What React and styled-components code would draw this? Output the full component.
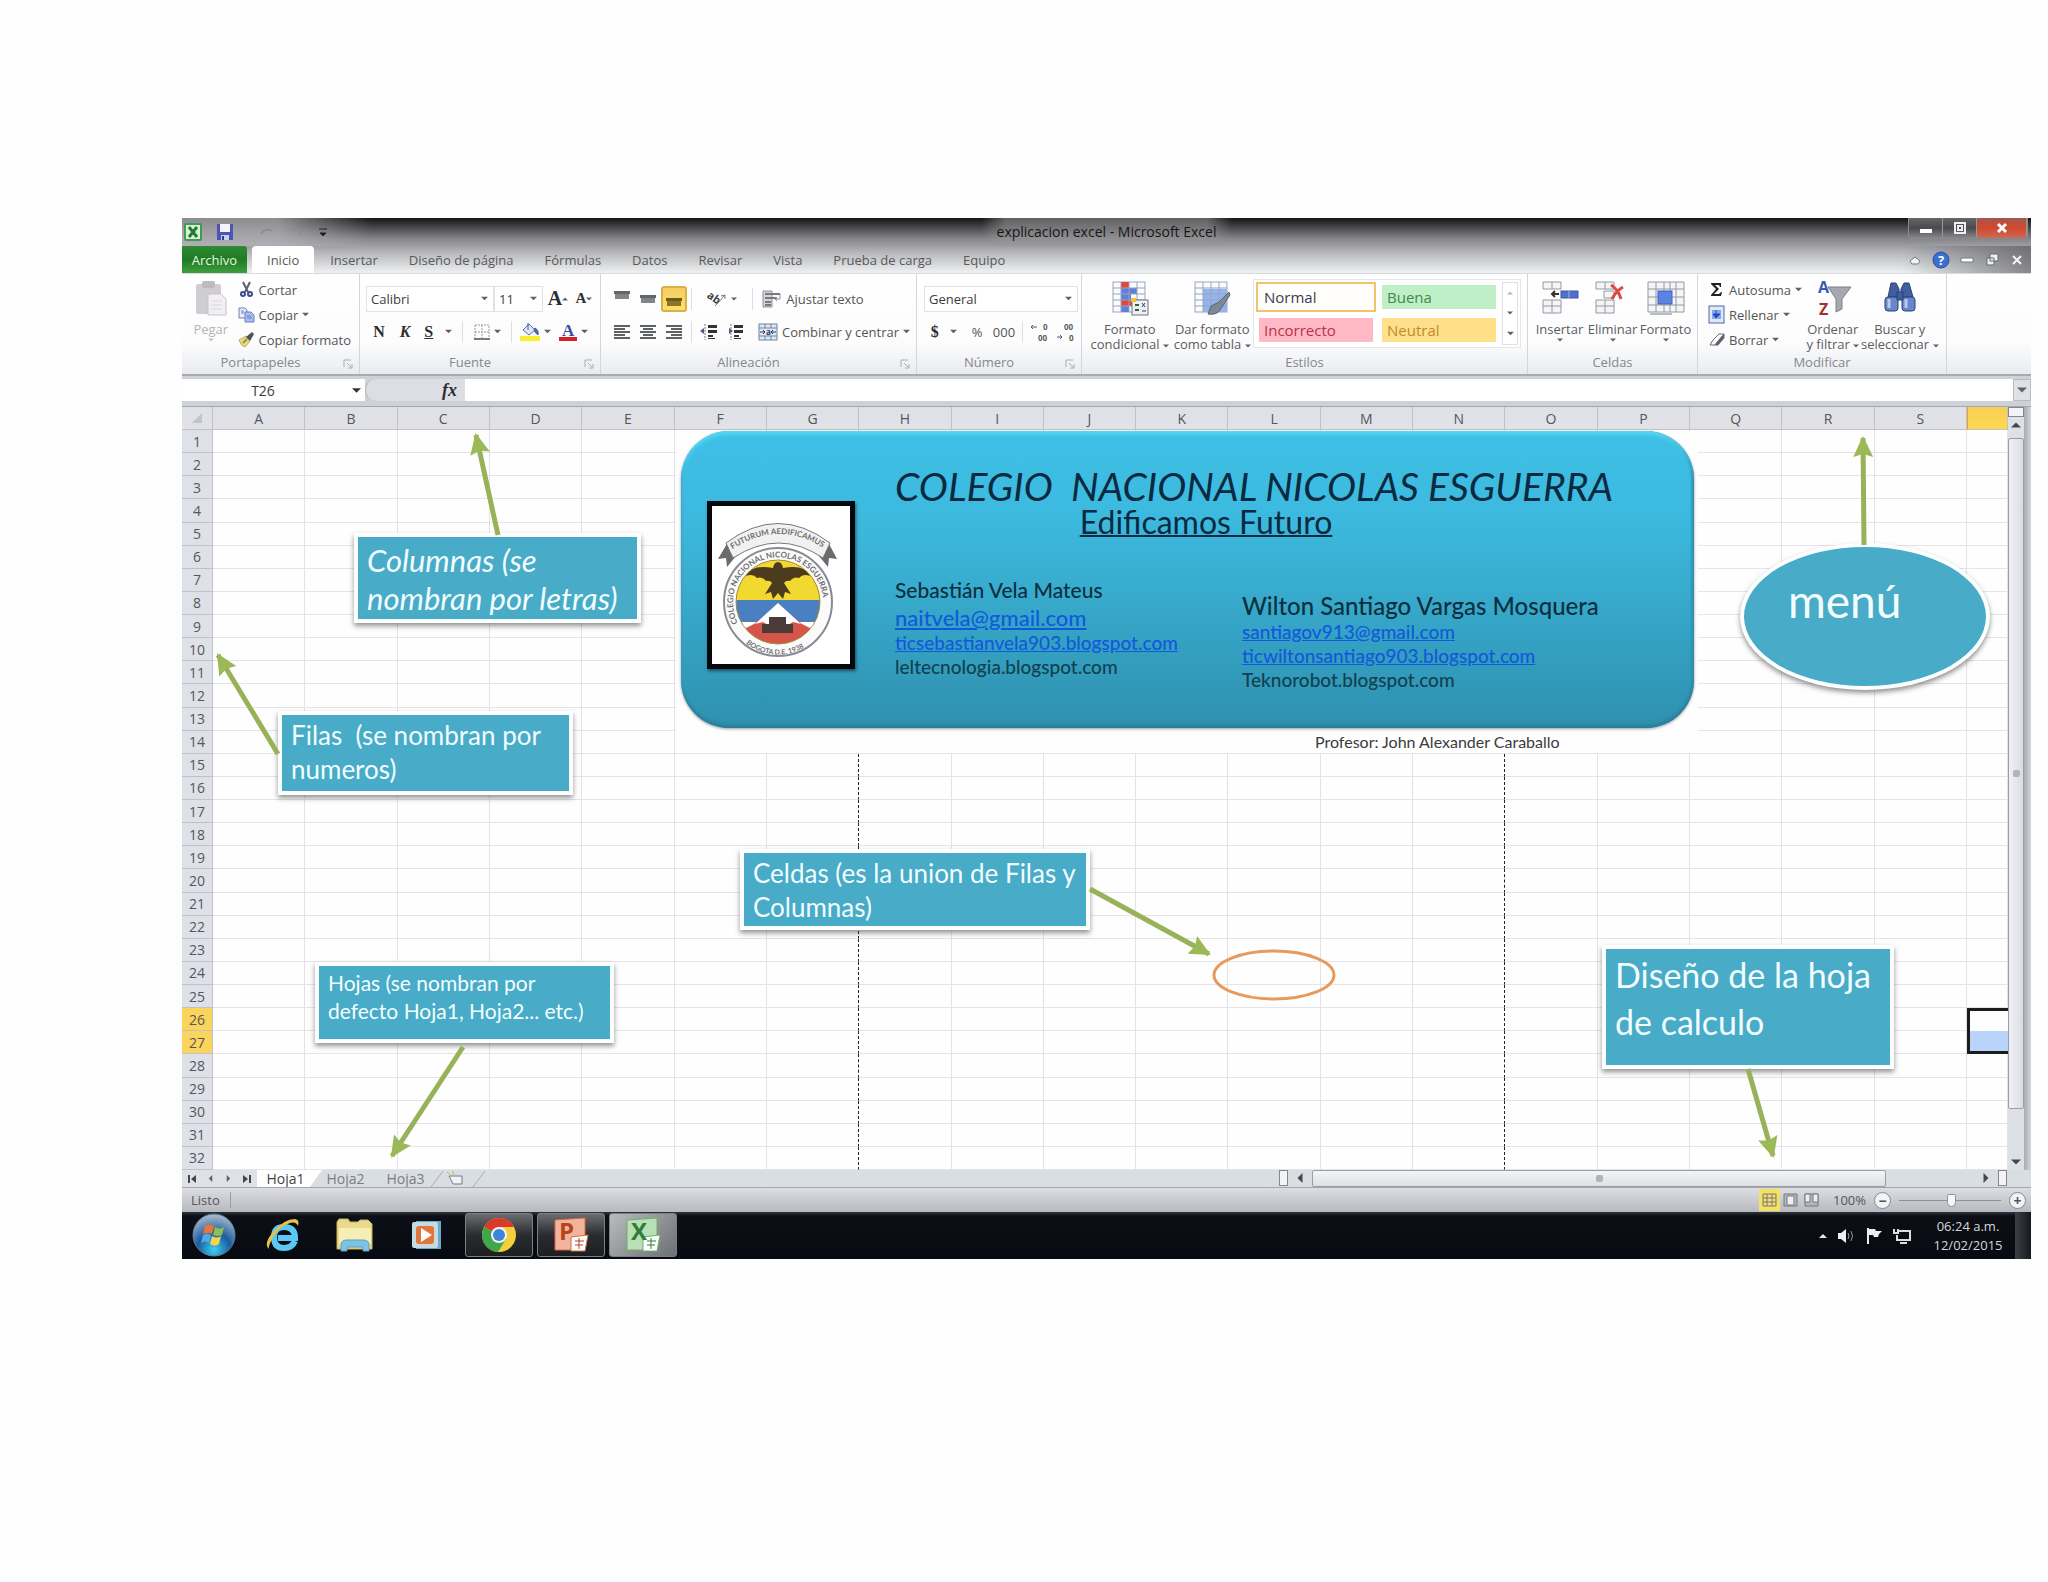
import React from 'react';
import styled, { createGlobalStyle, css } from 'styled-components';

const GlobalStyle = createGlobalStyle`
  * {
    box-sizing: border-box;
  }

  body {
    margin: 0;
    background: #fefefe;
    font-family: 'Open Sans', 'Noto Sans', sans-serif;
    font-size: 13px;
    color: #555;
  }

  button,
  input,
  select {
    font: inherit;
    color: inherit;
    margin: 0;
    padding: 0;
    border: 0;
    background: none;
  }

  svg {
    overflow: visible;
  }
`;

const Slide = styled.main`
  min-height: 100vh;
  padding: 218px 17px 40px 182px;
`;

const Window = styled.div`
  display: flex;
  flex-direction: column;
`;

/* title bar and tabs */

const Chrome = styled.header`
  background: linear-gradient(#141416 0, #404042 8px, #828286 20px, #b4b5b8 34px, #eceef0 54px);
`;

const TitleBar = styled.div`
  display: grid;
  grid-template-columns: 1fr auto 1fr;
  align-items: start;
  height: 28px;
`;

const QuickAccess = styled.div`
  display: flex;
  align-items: center;
  gap: 14px;
  width: 190px;
  height: 28px;
  padding-left: 2px;
  background: linear-gradient(90deg, rgba(180, 180, 186, 0.75) 50%, transparent);
`;

const Title = styled.div`
  padding: 0 16px;
  font-size: 14px;
  line-height: 28px;
  color: #161616;
  background: linear-gradient(
    90deg,
    rgba(150, 150, 152, 0),
    rgba(150, 150, 152, 0.6) 10%,
    rgba(150, 150, 152, 0.6) 90%,
    rgba(150, 150, 152, 0)
  );
`;

const WindowButtons = styled.div`
  display: flex;
  justify-self: end;
  margin-right: 3px;
  border: 1px solid #8a8a8c;
  border-top: 0;
  border-radius: 0 0 4px 4px;
  overflow: hidden;
`;

const WindowButton = styled.button`
  display: flex;
  align-items: center;
  justify-content: center;
  width: ${(p) => (p.$close ? 50 : 34)}px;
  height: 20px;
  border-right: 1px solid #98989a;
  background: ${(p) =>
    p.$close ? 'linear-gradient(#a4574c, #d2492f 50%, #c96a55)' : 'linear-gradient(#66666a, #4a4a4e 50%, #88888c)'};
`;

const TabBar = styled.nav`
  display: flex;
  gap: 1px;
  height: 27px;
`;

const FileTab = styled.button`
  width: 65px;
  margin-right: 4px;
  color: #e6f6e0;
  background: linear-gradient(#2f8a33, #1f7a24 50%, #3f9e3c);
  border-radius: 0 3px 0 0;
`;

const Tab = styled.button`
  padding: 0 15px;
  color: #58585a;
  ${(p) =>
    p.$active &&
    css`
      background: #fff;
      border-radius: 4px 4px 0 0;
    `}
`;

const TabTools = styled.div`
  display: flex;
  align-items: center;
  gap: 9px;
  margin-left: auto;
  padding: 0 6px;
  background: linear-gradient(90deg, transparent, rgba(90, 90, 94, 0.7));
`;

const ToolButton = styled.button`
  display: flex;
  align-items: center;
  justify-content: center;
  min-width: 16px;
`;

/* ribbon */

const Ribbon = styled.section`
  display: flex;
  height: 103px;
  background: linear-gradient(#fff, #fcfcfd 70%, #e9ebef);
  border-top: 1px solid #d8dadd;
  border-bottom: 2px solid #a9abb3;
`;

const Group = styled.div`
  display: flex;
  flex-direction: column;
  flex: none;
  width: ${(p) => p.$width}px;
  border-right: 1px solid #d3d6dc;
`;

const GroupBody = styled.div`
  display: flex;
  flex: 1;
  padding: 3px ${(p) => p.$pad || 6}px 0;
`;

const GroupLabel = styled.div`
  position: relative;
  height: 20px;
  padding-right: ${(p) => (p.$launcher ? 20 : 0)}px;
  line-height: 16px;
  text-align: center;
  color: #85878c;
`;

const Launcher = styled.svg`
  position: absolute;
  right: 6px;
  top: 5px;
`;

const BigButton = styled.button`
  display: flex;
  flex-direction: column;
  align-items: center;
  width: ${(p) => p.$width}px;
  line-height: 15px;
  text-align: center;
  white-space: nowrap;
  color: ${(p) => (p.$muted ? '#b4b4b8' : '#5c5c60')};

  > svg:first-child {
    margin: 3px 0 6px;
  }
`;

const Stack = styled.div`
  display: flex;
  flex-direction: column;
  padding-top: ${(p) => p.$top || 0}px;
`;

const RowButton = styled.button`
  display: flex;
  align-items: center;
  gap: 4px;
  height: 25px;
  padding: 0 3px;
  white-space: nowrap;

  > svg:first-child {
    flex: none;
  }
`;

const Tools = styled.div`
  display: flex;
  align-items: center;
  height: 33px;
`;

const Tool = styled.button`
  display: flex;
  align-items: center;
  justify-content: center;
  flex: none;
  gap: ${(p) => p.$gap ?? 4}px;
  width: ${(p) => p.$width || 26}px;
  height: 26px;
  white-space: nowrap;
  ${(p) =>
    p.$active &&
    css`
      border: 2px solid #d9b04a;
      border-radius: 3px;
      background: linear-gradient(#f6cd62, #ffdf6c);
    `}
`;

const Glyph = styled.span`
  font-family: 'Liberation Serif', serif;
  font-size: ${(p) => p.$size || 16}px;
  font-weight: bold;
  font-style: ${(p) => (p.$italic ? 'italic' : 'normal')};
  text-decoration: ${(p) => (p.$underline ? 'underline' : 'none')};
  color: #2d2d30;
`;

const Split = styled.span`
  flex: none;
  width: 1px;
  height: 22px;
  margin: 0 4px;
  background: #dcdee2;
`;

const Combo = styled.label`
  display: flex;
  align-items: center;
  width: ${(p) => p.$width}px;
  height: 26px;
  padding: 0 5px 0 4px;
  border: 1px solid #e0e2e6;
  background: #fff;
  color: #3c3c40;

  select {
    flex: 1;
    min-width: 0;
    appearance: none;
    outline: 0;
  }
`;

const Gallery = styled.div`
  display: grid;
  grid-template-columns: 120px 120px 16px;
  grid-template-rows: 30px 30px;
  gap: 3px;
  align-self: start;
  margin-top: 2px;
  padding: 2px;
  border: 1px solid #e4e6e9;
  background: #fff;
`;

const StyleCell = styled.button`
  margin: ${(p) => (p.$active ? 0 : 3)}px;
  padding-left: ${(p) => (p.$active ? 6 : 5)}px;
  font-size: 15px;
  line-height: 20px;
  text-align: left;
  color: ${(p) => p.$ink};
  background: ${(p) => p.$fill};
  border: ${(p) => (p.$active ? '2px solid #efc46a' : '0')};
`;

const GalleryScroll = styled.div`
  grid-column: 3;
  grid-row: 1 / 3;
  display: flex;
  flex-direction: column;
  justify-content: space-around;
  align-items: center;
  border: 1px solid #dfe1e5;
`;

/* formula bar */

const FormulaBar = styled.div`
  display: flex;
  height: 31px;
  padding: 3px 0 5px;
  background: #cfd1d8;
  border-bottom: 1px solid #a5a7ae;
`;

const NameBox = styled.label`
  display: flex;
  align-items: center;
  width: 183px;
  padding-right: 4px;
  background: #fff;
  color: #3a3a3d;

  input {
    flex: 1;
    min-width: 0;
    padding-right: 8px;
    font-size: 14px;
    text-align: center;
  }
`;

const FxArea = styled.div`
  display: flex;
  justify-content: flex-end;
  align-items: center;
  width: 100px;
  padding-right: 8px;
  border-radius: 12px 0 0 12px;
  background: #dcdee4;
  border-left: 1px solid #b6b8be;
`;

const FormulaInput = styled.input`
  flex: 1;
  background: #fff;
`;

const Expand = styled.button`
  display: flex;
  align-items: center;
  justify-content: center;
  width: 18px;
  border: 1px solid #b9bbc2;
  background: #dfe1e6;
`;

/* sheet */

const SheetArea = styled.section`
  position: relative;
  display: flex;
`;

const Grid = styled.table`
  flex: 1;
  width: 100%;
  min-width: 0;
  height: 763px;
  table-layout: fixed;
  border-collapse: separate;
  border-spacing: 0;
  background: #fefefe;
  font-size: 14px;

  th {
    padding: 1px 0 0;
    font-weight: 500;
    line-height: 18px;
    color: #55565a;
    background: #dfe1e8;
    border-right: 1px solid #c0c2ca;
    border-bottom: 1px solid #c0c2ca;
  }

  thead th {
    height: 23px;
    background: linear-gradient(#dde2e7, #e2e1e6);
  }

  td {
    padding: 0;
    border-right: 1px solid #e3e1e6;
    border-bottom: 1px solid #e6e4e8;
  }

  tbody tr:nth-child(n + 15) td:nth-child(8),
  tbody tr:nth-child(n + 15) td:nth-child(15) {
    border-right: 1px dashed #222;
  }

  tr.picked th {
    background: #fbd45c;
  }

  thead th:last-child {
    background: linear-gradient(#f8cf55, #ffd84f);
    border-left: 1px solid #dda43a;
  }

  tr.picked td:last-child {
    border-left: 3px solid #1c1c1c;
    border-right: 0;
  }

  tr.first td:last-child {
    border-top: 3px solid #1c1c1c;
    border-bottom: 0;
  }

  tr.last td:last-child {
    border-bottom: 3px solid #1c1c1c;
    background: #b9d3fa;
  }
`;

const VScroll = styled.div`
  display: flex;
  flex: none;
  flex-direction: column;
  align-items: center;
  width: 23px;
  padding-right: 7px;
  background: linear-gradient(90deg, #dde0e6 16px, #a9abb3 16px, #d5d7dc 23px);
`;

const SplitBox = styled.div`
  flex: none;
  width: ${(p) => (p.$upright ? 9 : 16)}px;
  height: ${(p) => (p.$upright ? 16 : 10)}px;
  border: 1px solid #85878d;
  background: #f2f3f5;
`;

const ScrollThumb = styled.div`
  display: flex;
  align-items: center;
  justify-content: center;
  border: 1px solid #9b9da4;
  border-radius: 2px;
  background: ${(p) => (p.$vertical ? 'linear-gradient(90deg, #f0f0f6, #dcdce4)' : 'linear-gradient(#f4f5f7, #dcdfe5)')};
  ${(p) =>
    p.$vertical
      ? css`
          width: 16px;
          height: 671px;
          margin: 5px 0 auto;
        `
      : css`
          flex: 1;
          margin-right: 88px;
        `}
`;

const Grip = styled.span`
  width: 7px;
  height: 7px;
  border-radius: 2px;
  background: #b2b4ba;
`;

const ArrowSlot = styled.div`
  display: flex;
  align-items: center;
  justify-content: center;
  width: 16px;
  height: 16px;
`;

/* drawn objects that float over the cells */

const Layer = styled.div`
  position: absolute;
  inset: 0;
`;

const Arrows = styled.svg`
  position: absolute;
  inset: 0;
  width: 100%;
  height: 100%;
`;

const BannerPatch = styled.div`
  position: absolute;
  left: 494px;
  top: 24px;
  width: 1022px;
  height: 322px;
  background: #fefefe;
`;

const Banner = styled.div`
  display: flex;
  margin: 0 4px 0 5px;
  height: 297px;
  padding: 70px 0 0 26px;
  border-radius: 48px;
  background: linear-gradient(#3fc0e6, #3cb9de 30%, #2f90ae);
  box-shadow: inset 0 5px 4px -2px #5adcf5, inset 0 -3px 3px #2b7f9b, inset -2px 0 3px #2a86a4, 0 1px 3px #999;
  font-family: Lato, 'Open Sans', sans-serif;
  color: #0b2a40;
`;

const Crest = styled.svg`
  flex: none;
  border: 5px solid #05080c;
  background: #fff;
  box-shadow: 1px 2px 3px rgba(0, 0, 0, 0.5);
`;

const BannerText = styled.div`
  flex: 1;
  margin: -36px 0 0 40px;
`;

const School = styled.h1`
  margin: 0;
  font-size: 39px;
  font-weight: normal;
  font-style: italic;
  line-height: 42px;
  white-space: pre;
`;

const Motto = styled.div`
  width: 622px;
  font-size: 32px;
  line-height: 30px;
  text-align: center;
  text-decoration: underline;
  text-decoration-thickness: 2px;
`;

const Authors = styled.div`
  display: grid;
  grid-template-columns: 347px 1fr;
`;

const Author = styled.address`
  display: flex;
  flex-direction: column;
  align-items: flex-start;
  padding-top: ${(p) => p.$top}px;
  font-size: 19px;
  font-weight: 500;
  font-style: normal;
  line-height: 24px;
  color: #10414f;

  strong {
    font-size: ${(p) => p.$name}px;
    font-weight: 500;
    line-height: 28px;
    color: #0c2f40;
  }

  a {
    color: #1258dc;
  }

  a.large {
    font-size: 22px;
    line-height: 27px;
  }
`;

const Teacher = styled.div`
  padding: 3px 0 0 639px;
  font-family: Lato, 'Open Sans', sans-serif;
  font-size: 16px;
  line-height: 22px;
  color: #3b3b3b;
`;

const Callout = styled.div`
  position: absolute;
  left: ${(p) => p.$x}px;
  top: ${(p) => p.$y}px;
  width: ${(p) => p.$w}px;
  height: ${(p) => p.$h}px;
  padding: ${(p) => p.$pad || 0}px 9px;
  border: 4px solid #fbffff;
  background: #48abc7;
  box-shadow: 0 3px 5px rgba(60, 60, 60, 0.55);
  font-family: Lato, 'Open Sans', sans-serif;
  font-size: ${(p) => p.$size}px;
  font-style: ${(p) => (p.$italic ? 'italic' : 'normal')};
  line-height: ${(p) => p.$line}px;
  color: #f2fdff;
  white-space: pre-line;
`;

const MenuBubble = styled.div`
  position: absolute;
  left: 1558px;
  top: 136px;
  width: 250px;
  height: 147px;
  padding: 27px 0 0 44px;
  border: 4px solid #fbffff;
  border-radius: 50%;
  background: #48abc7;
  box-shadow: 0 3px 5px rgba(60, 60, 60, 0.55);
  font-family: Lato, 'Open Sans', sans-serif;
  font-size: 46px;
  line-height: 54px;
  color: #f2fdff;
`;

/* sheet tabs, status bar, taskbar */

const SheetTabs = styled.div`
  display: flex;
  height: 18px;
  background: #d9dee3;
  border-bottom: 1px solid #a4a6ad;
`;

const TabNav = styled.div`
  display: flex;
  align-items: center;
  justify-content: space-around;
  width: 75px;
  background: #dfe1e8;
`;

const SheetTab = styled.button`
  width: 65px;
  padding-right: 8px;
  margin-right: -5px;
  font-size: 14px;
  line-height: 17px;
  color: ${(p) => (p.$active ? '#3f3f44' : '#7a7c84')};
  background: ${(p) => (p.$active ? '#fff' : 'none')};
  clip-path: polygon(0 0, 100% 0, calc(100% - 12px) 100%, 0 100%);
`;

const HScroll = styled.div`
  display: flex;
  align-items: stretch;
  width: 728px;
  margin: 0 24px 0 auto;
  gap: 4px;
`;

const StatusBar = styled.footer`
  display: flex;
  align-items: center;
  height: 24px;
  background: linear-gradient(#dcdee3, #c9cbd1 50%, #b7b9c0);
`;

const Ready = styled.div`
  padding: 0 10px 0 9px;
  border-right: 1px solid #9b9da4;
  line-height: 16px;
`;

const StatusRight = styled.div`
  display: flex;
  align-items: center;
  gap: 8px;
  margin-left: auto;
  padding-right: 5px;
`;

const Views = styled.div`
  display: flex;
  margin-right: 3px;
`;

const ViewButton = styled.button`
  display: flex;
  align-items: center;
  justify-content: center;
  width: 21px;
  height: 22px;
  background: ${(p) => (p.$active ? '#f4e062' : 'none')};
`;

const ZoomSlider = styled.input`
  width: 102px;
  height: 16px;
  appearance: none;

  &::-webkit-slider-runnable-track {
    height: 1px;
    background: #8f9198;
  }

  &::-webkit-slider-thumb {
    appearance: none;
    width: 9px;
    height: 13px;
    margin-top: -6px;
    border: 1px solid #8f9198;
    border-radius: 2px 2px 5px 5px;
    background: #f6f7f9;
  }
`;

const RoundButton = styled.button`
  width: 17px;
  height: 17px;
  border: 1px solid #85878e;
  border-radius: 50%;
  background: #f2f3f5;
  line-height: 13px;
  font-weight: bold;
  font-size: 14px;
`;

const TaskBar = styled.nav`
  display: flex;
  height: 47px;
  background: linear-gradient(#30343b 0, #0c0f15 4px, #070a10);
`;

const Task = styled.button`
  display: flex;
  align-items: center;
  justify-content: center;
  width: ${(p) => (p.$start ? 63 : 68)}px;
  margin: 1px 4px 2px 0;
  border-radius: 3px;
  ${(p) =>
    p.$open &&
    css`
      border: 1px solid #7c7f84;
      background: ${p.$front
        ? 'linear-gradient(135deg, #b9bcbe, #6c7073)'
        : 'linear-gradient(#6b6d70, #2a2c30 50%, #1c1e22)'};
    `}
`;

const Tray = styled.div`
  display: flex;
  align-items: center;
  gap: 10px;
  margin-left: auto;
  color: #d6d8da;
`;

const Clock = styled.time`
  width: 94px;
  font-size: 13px;
  line-height: 19px;
  text-align: center;
`;

const ShowDesktop = styled.button`
  align-self: stretch;
  width: 16px;
  margin-left: -10px;
  border-left: 1px solid #3a3d42;
  background: linear-gradient(90deg, #3b3e43, #15181c);
`;

/* icons */

const Caret = ({ dir = 'down', size = 5, color = '#5f6166' }) => {
  const turn = { down: 0, left: 90, up: 180, right: 270 }[dir];
  return (
    <svg width={size + 2} height={size + 2} viewBox="0 0 8 8">
      <path d="M0 2h8L4 6z" fill={color} transform={`rotate(${turn} 4 4)`} />
    </svg>
  );
};

const EndCaret = ({ flip }) => (
  <svg width="9" height="8" viewBox="0 0 9 8" fill="#44464b">
    <path d={flip ? 'M0 0l5 4-5 4zM6 0h2v8H6z' : 'M9 0L4 4l5 4zM1 0h2v8H1z'} />
  </svg>
);

const Corner = () => (
  <Launcher width="10" height="10" viewBox="0 0 10 10" fill="none" stroke="#a9abb1">
    <path d="M1 8V1h7M4 4l4 4M9 5v4H5" />
  </Launcher>
);

const Lines = ({ widths, align = 'left', y = 1 }) => (
  <svg width="18" height="16" viewBox="0 0 18 16" fill="#5d6163">
    {widths.map((w, i) => {
      const x = { left: 1, center: (18 - w) / 2, right: 17 - w }[align];
      return <rect key={i} x={x} y={y + i * 3} width={w} height="2" />;
    })}
  </svg>
);

const Block = ({ y, color = '#62666a' }) => (
  <svg width="18" height="16" viewBox="0 0 18 16" fill={color}>
    <rect x="1" y={y} width="16" height="3" />
    <rect x="2" y={y + 3} width="14" height="5" opacity="0.8" />
  </svg>
);

const Indent = ({ flip }) => (
  <svg width="18" height="16" viewBox="0 0 18 16">
    <path d="M8 1h9v3H8zM8 6h9v3H8zM8 11h5v2H8zM8 14h7v1H8z" fill="#333" />
    <path d="M5 0v16" stroke="#777" strokeDasharray="2 1" />
    <path d={flip ? 'M0 7l4-3v6z' : 'M7 7L3 4v6z'} fill="#4a5a86" />
  </svg>
);

const PasteIcon = () => (
  <svg width="34" height="36" viewBox="0 0 34 36">
    <rect x="2" y="4" width="25" height="30" rx="2" fill="#cfcdd2" />
    <rect x="8" y="1" width="13" height="7" rx="2" fill="#bdbac0" />
    <path d="M14 14h13l5 5v16H14z" fill="#f1eff2" stroke="#c6c4c9" />
    <path d="M17 21h11M17 25h11M17 29h11" stroke="#d9d7db" />
  </svg>
);

const CutIcon = () => (
  <svg width="17" height="17" viewBox="0 0 17 17" fill="none" strokeWidth="2">
    <path d="M5 1l5 10M12 1L7 11" stroke="#5a6070" />
    <circle cx="5" cy="13" r="2" stroke="#3a4b8e" />
    <circle cx="12" cy="13" r="2" stroke="#3a4b8e" />
  </svg>
);

const CopyIcon = () => (
  <svg width="17" height="17" viewBox="0 0 17 17" fill="#e6eefc" stroke="#6a7fc0">
    <path d="M1 2h6l2 2v8H1z" />
    <path d="M7 6h6l3 3v7H7z" fill="#a9bdf0" />
    <path d="M9 10h4M9 12h5M3 5h3M3 7h3" />
  </svg>
);

const BrushIcon = () => (
  <svg width="17" height="17" viewBox="0 0 17 17">
    <path d="M1 9l7-4 4 5-5 6q-4-1-6-7z" fill="#ead98a" stroke="#c2a94d" />
    <path d="M8 6l6-5 2 2-4 7z" fill="#4d5257" />
    <path d="M5 12l4-4" stroke="#7fa04c" strokeWidth="2" />
  </svg>
);

const BordersIcon = () => (
  <svg width="16" height="16" viewBox="0 0 16 16" fill="none" stroke="#9a9ca2">
    <path d="M1 1h14v13M1 1v13M8 1v13M1 8h14" strokeDasharray="2 1" />
    <path d="M0 15h16" stroke="#77797e" strokeWidth="2" />
  </svg>
);

const FillIcon = () => (
  <svg width="20" height="20" viewBox="0 0 20 20">
    <path d="M3 8l6-6 6 6-6 5z" fill="#dfe7f7" stroke="#5570a8" />
    <path d="M8 1v7M15 6q4 2 3 7-3-2-4-5z" fill="#4a6cae" stroke="#4a5f8e" />
    <rect y="14" width="20" height="5" fill="#f6ee2e" />
  </svg>
);

const FontColorIcon = () => (
  <svg width="18" height="20" viewBox="0 0 18 20">
    <text x="3" y="14" fontFamily="Liberation Serif, serif" fontSize="17" fontWeight="bold" fill="#39509c">A</text>
    <rect y="15" width="18" height="4" fill="#dc1f26" />
  </svg>
);

const OrientIcon = () => (
  <svg width="20" height="18" viewBox="0 0 20 18">
    <text x="0" y="11" transform="rotate(35 6 8)" fontSize="11" fontWeight="bold" fill="#444">ab</text>
    <path d="M8 16L18 5M18 5l-4 1M18 5v4" stroke="#777" fill="none" />
  </svg>
);

const WrapIcon = () => (
  <svg width="20" height="18" viewBox="0 0 20 18">
    <path d="M1 1h9v16H1z" fill="#d5d6d9" stroke="#8e9095" />
    <path d="M3 4h15M3 8h12M3 12h6M3 15h6" stroke="#77797e" strokeWidth="2" />
    <path d="M18 4v5h-5M15 7l-2 2 2 2" fill="none" stroke="#8a8c91" />
  </svg>
);

const MergeIcon = () => (
  <svg width="20" height="18" viewBox="0 0 20 18">
    <rect x="1" y="1" width="18" height="16" fill="#dfe8f5" stroke="#6e83a0" />
    <path d="M1 5h18M1 13h18M7 1v4M13 1v4M7 13v4M13 13v4" stroke="#6e83a0" />
    <path d="M2 9h5M18 9h-5M5 7l2 2-2 2M15 7l-2 2 2 2" fill="none" stroke="#2d3b5c" />
    <text x="8" y="12" fontSize="8" fontWeight="bold" fill="#2d3b5c">a</text>
  </svg>
);

const DecimalIcon = ({ less }) => (
  <svg width="20" height="20" viewBox="0 0 20 20" fill="#5a5c61" fontSize="8" fontWeight="bold">
    <text x={less ? 8 : 13} y="8">{less ? '00' : '0'}</text>
    <text x={less ? 13 : 8} y="19">{less ? '0' : '00'}</text>
    <path d={less ? 'M1 15h5M4 13l2 2-2 2' : 'M1 5h6M3 3L1 5l2 2'} stroke="#4d5a7c" fill="none" />
  </svg>
);

const TableIcon = ({ kind }) => (
  <svg width="38" height="36" viewBox="0 0 38 36">
    <rect x="2" y="2" width="32" height="30" fill="#fbfcfe" stroke="#9aa3b8" />
    {kind === 'rules' ? (
      <>
        <path d="M10 2h8v6h-8zM10 20h12v6H10z" fill="#e2473d" />
        <path d="M10 8h16v6H10zM10 14h10v6H10zM10 26h8v6h-8z" fill="#5d80dc" />
      </>
    ) : (
      <path d="M10 9h24v23H10z" fill="#94b4f0" />
    )}
    <path d="M2 8h32M2 14h32M2 20h32M2 26h32M10 2v30M18 2v30M26 2v30" stroke="#9aa3b8" />
    {kind === 'rules' ? (
      <>
        <rect x="21" y="20" width="16" height="15" fill="#eef0f2" stroke="#6d7480" />
        <path d="M24 25h4M24 30h4" stroke="#35613a" strokeWidth="2" />
        <path d="M31 23l3 4M34 23l-3 4M31 31h4" stroke="#33415f" />
        <path d="M20 18h5v4h-5z" fill="#f4c53c" />
      </>
    ) : (
      <path d="M36 12L26 22l-8 4-3 8q10 2 14-7l8-12z" fill="#7d8796" stroke="#5d6674" />
    )}
  </svg>
);

const CellsIcon = ({ kind }) => (
  <svg width="38" height="36" viewBox="0 0 38 36" fill="#f4f5f7" stroke="#9598a0">
    {kind === 'format' ? (
      <>
        <path d="M1 2h36v30H1zM1 9h36M1 25h36M9 2v30M29 2v30M17 2v30M23 2v30M1 17h36" />
        <rect x="11" y="11" width="14" height="13" fill="#5b83e4" stroke="#3e62bd" />
        <path d="M3 34h22" stroke="#b9bcc2" strokeWidth="2" />
      </>
    ) : (
      <>
        <path d="M2 2h18v7H2zM11 2v7M2 20h18v13H2zM11 20v13M2 26h18" />
        {kind === 'insert' ? (
          <>
            <rect x="20" y="11" width="17" height="7" fill="#4f70cb" stroke="#3c58a8" />
            <path d="M28 11v7" stroke="#9db2ea" />
            <path d="M18 14h-7M14 11l-3 3 3 3" fill="none" stroke="#333" strokeWidth="2" />
          </>
        ) : (
          <>
            <path d="M10 11h10v7H10z" />
            <path d="M17 5q7 4 10 14M29 7q-7 4-11 12" fill="none" stroke="#dd4a45" strokeWidth="3" />
          </>
        )}
      </>
    )}
  </svg>
);

const SigmaIcon = () => (
  <svg width="17" height="17" viewBox="0 0 17 17">
    <path d="M3 2h10v4h-1l-1-2H7l4 4-5 5h5l2-2h1l-1 4H3v-1l5-6-5-5z" fill="#222" />
  </svg>
);

const FillDownIcon = () => (
  <svg width="17" height="19" viewBox="0 0 17 19">
    <rect x="1" y="1" width="15" height="17" fill="#dfe8fa" stroke="#51689e" />
    <rect x="4" y="5" width="9" height="9" fill="#86a6ee" />
    <path d="M8 5v7M5 9l3 4 4-4z" fill="#2649b8" stroke="#2649b8" />
  </svg>
);

const EraserIcon = () => (
  <svg width="17" height="17" viewBox="0 0 17 17" fill="#fff" stroke="#6a6c72">
    <path d="M5 9l6-6h5l-6 7-3 4H2z" />
    <path d="M7 14l9-11v4l-6 7z" fill="#5b5d63" />
  </svg>
);

const SortIcon = () => (
  <svg width="38" height="36" viewBox="0 0 38 36" fontWeight="bold" fontSize="16">
    <path d="M14 7h23L28 19v10l-6 3V19z" fill="#a5a8ad" stroke="#7e8187" />
    <text x="4" y="13" fill="#4256b4">A</text>
    <text x="5" y="35" fill="#a3302e">Z</text>
  </svg>
);

const BinocularsIcon = () => (
  <svg width="36" height="36" viewBox="0 0 36 36" fill="#3f5f9f" stroke="#2b4376">
    <path d="M9 3h5l3 6v8H6zM22 3h5l4 14H19V9z" />
    <rect x="3" y="17" width="13" height="14" rx="3" fill="#6787c8" />
    <rect x="20" y="17" width="13" height="14" rx="3" fill="#6787c8" />
    <path d="M15 12h6v8h-6z" />
    <path d="M7 19v9M24 19v9" stroke="#b9caee" strokeWidth="3" />
  </svg>
);

const ExcelMark = () => (
  <svg width="18" height="18" viewBox="0 0 18 18">
    <rect width="18" height="18" rx="2" fill="#3f9c4e" />
    <rect x="2" y="2" width="14" height="14" fill="#d8f0d6" />
    <path d="M5 4l8 10M13 4L5 14" stroke="#237a35" strokeWidth="3" />
  </svg>
);

const SaveIcon = () => (
  <svg width="18" height="18" viewBox="0 0 18 18">
    <path d="M1 1h16v16H1z" fill="#4a55b5" />
    <path d="M4 1h10v8H4z" fill="#f3f5fb" />
    <path d="M5 12h8v5H5z" fill="#c9cfe6" />
    <path d="M6 13h2v4H6z" fill="#33408f" />
  </svg>
);

const MiniGrid = () => (
  <svg width="15" height="14" viewBox="0 0 15 14" fill="none" stroke="#77797f">
    <path d="M1 1h13v12H1zM1 5h13M1 9h13M5 1v12M10 1v12" />
  </svg>
);

const MiniPage = ({ breaks }) => (
  <svg width="15" height="14" viewBox="0 0 15 14" fill="#eceef1" stroke="#77797f">
    <path d="M1 1h13v12H1z" fill="#b4b6bb" />
    <path d={breaks ? 'M1 1h5v8H1zM9 1h5v8H9z' : 'M4 3h7v9H4z'} />
  </svg>
);

const StartIcon = () => (
  <svg width="44" height="44" viewBox="0 0 44 44">
    <defs>
      <radialGradient id="orb" cx="50%" cy="85%" r="80%">
        <stop offset="0" stopColor="#39d0f2" />
        <stop offset="0.5" stopColor="#1c5c9e" />
        <stop offset="1" stopColor="#9fb4c8" />
      </radialGradient>
    </defs>
    <circle cx="22" cy="22" r="21" fill="url(#orb)" stroke="#5f7f9c" />
    <path d="M13 13q5-3 9 0l-2 8q-4-2-9 0z" fill="#e8743a" />
    <path d="M23 14q5 3 9 0l-2 8q-4 2-9 0z" fill="#8cc152" />
    <path d="M11 22q4-3 8 0l-2 8q-4-3-8 0z" fill="#4fa8e8" />
    <path d="M20 23q5 3 9 0l-2 8q-4 3-9 0z" fill="#f6d34a" />
  </svg>
);

const ExplorerIcon = () => (
  <svg width="38" height="38" viewBox="0 0 38 38" fill="none">
    <path d="M31 25q-3 7-11 7-10 0-10-11 0-10 10-10 11 0 11 11H14" stroke="#5cc8f5" strokeWidth="6" />
    <path d="M5 33q-6-5 4-17Q20 3 31 3q5 1 3 7-2-5-8-3Q14 11 8 23q-4 8-3 10z" fill="#e8c14a" />
  </svg>
);

const FolderIcon = () => (
  <svg width="40" height="38" viewBox="0 0 40 38">
    <path d="M2 6l2-3h9l2 3h8l2-2h8l4 4v25H2z" fill="#e9d98a" stroke="#c7b562" />
    <path d="M4 12h32v16H4z" fill="#f6eeb4" />
    <path d="M6 35v-6q0-5 6-5h16q6 0 6 5v6h-6v-4H12v4z" fill="#7cc4e6" stroke="#569fc4" />
  </svg>
);

const PlayerIcon = () => (
  <svg width="32" height="32" viewBox="0 0 32 32">
    <path d="M5 2h25v28H5z" fill="#6fa9c8" />
    <rect x="1" y="3" width="26" height="26" rx="2" fill="#c4dbe4" />
    <rect x="5" y="7" width="18" height="18" rx="3" fill="#e0763a" />
    <path d="M10 9l11 7-11 7z" fill="#fff" />
  </svg>
);

const ChromeIcon = () => (
  <svg width="36" height="36" viewBox="0 0 36 36">
    <circle cx="18" cy="18" r="17" fill="#f2cf3b" />
    <path d="M18 18L3 10A17 17 0 0 1 33 10H18z" fill="#da3a2c" />
    <path d="M18 18L3 10A17 17 0 0 0 17 35l8-13z" fill="#3ea64b" />
    <circle cx="18" cy="18" r="8" fill="#f4f4f2" />
    <circle cx="18" cy="18" r="6" fill="#3f83dc" />
  </svg>
);

const OfficeIcon = ({ letter, ink, paper, edge }) => (
  <svg width="36" height="36" viewBox="0 0 36 36">
    <path d="M2 3l30-2v32H2z" fill={paper} stroke={edge} />
    <path d="M18 20l17-2-3 16H18z" fill="#fff" stroke={edge} />
    <path d="M22 24h9M22 28h8M26 21v11" stroke={ink} />
    <text x="6" y="23" fontSize="24" fontWeight="bold" fill={ink}>{letter}</text>
  </svg>
);

const CrestDrawing = () => (
  <Crest width="148" height="168" viewBox="0 0 138 158">
    <defs>
      <path id="ribbonArc" d="M18 45q49-34 98 0" />
      <path id="ringTop" d="M29 122A45 45 0 1 1 103 122" />
      <path id="ringLow" d="M31 135A52 52 0 0 0 101 135" />
      <clipPath id="disc">
        <circle cx="66" cy="96" r="42" />
      </clipPath>
    </defs>
    <path d="M16 36L6 53l8-1 1 9 14-17zM116 36l9 17-8-1-1 9-14-17z" fill="#6b6b6b" />
    <path d="M14 37q52-39 104 0l-7 15q-44-30-90 0z" fill="#f1f1f1" stroke="#777" />
    <text fontSize="8" fontWeight="bold" fill="#6f6f6f">
      <textPath href="#ribbonArc" startOffset="3">FUTURUM AEDIFICAMUS</textPath>
    </text>
    <circle cx="66" cy="96" r="54" fill="#fbfbfb" stroke="#8a8a94" strokeWidth="2" />
    <text fontSize="8" fontWeight="bold" fill="#6f6f6f">
      <textPath href="#ringTop" startOffset="6">COLEGIO NACIONAL NICOLAS ESGUERRA</textPath>
    </text>
    <text fontSize="7" fontWeight="bold" fill="#6f6f6f">
      <textPath href="#ringLow" startOffset="4">BOGOTA D.E. 1938</textPath>
    </text>
    <g clipPath="url(#disc)">
      <path d="M20 50h92v44H20z" fill="#f2d92f" />
      <path d="M20 94h92v22H20z" fill="#4a7fc1" />
      <path d="M20 116h92v30H20z" fill="#fff" />
      <path d="M66 98l-24 20-12 6 12 16h50l10-16-12-6z" fill="#d5554a" />
      <path d="M66 97l-23 21 8-2 7 4 8-4 8 4 7-4 8 2z" fill="#fff" />
    </g>
    <path d="M57 111h17v7h7v9H50v-9h7z" fill="#4b3b38" />
    <path
      d="M34 70q5-12 27-8 1-6 5-6t5 6q22-4 27 8-7-3-11 2-5-2-9 3-4-1-6 2l7 11-6-2-2 7-5-6-5 6-2-7-6 2 7-11q-2-3-6-2-4-5-9-3-4-5-11-2z"
      fill="#4c3b1d"
    />
    <circle cx="66" cy="96" r="42" fill="none" stroke="#a58a3a" />
  </Crest>
);

/* data */

const columns = 'ABCDEFGHIJKLMNOPQRS'.split('');
const rows = Array.from({ length: 32 }, (_, i) => i + 1);
const tabs = [
  'Inicio',
  'Insertar',
  'Diseño de página',
  'Fórmulas',
  'Datos',
  'Revisar',
  'Vista',
  'Prueba de carga',
  'Equipo',
];

const callouts = [
  { x: 172, y: 126, w: 287, h: 90, size: 31, line: 38, pad: 4, italic: true, text: 'Columnas (se\nnombran por letras)' },
  { x: 96, y: 304, w: 295, h: 84, size: 26, line: 34, pad: 3, text: 'Filas\u00a0 (se nombran por\nnumeros)' },
  { x: 558, y: 442, w: 350, h: 81, size: 26, line: 34, pad: 3, text: 'Celdas (es la union de Filas y\nColumnas)' },
  { x: 133, y: 555, w: 299, h: 81, size: 21, line: 28, pad: 3, text: 'Hojas (se nombran por\ndefecto Hoja1, Hoja2... etc.)' },
  { x: 1420, y: 538, w: 292, h: 124, size: 34, line: 47, pad: 2, text: 'Diseño de la hoja\nde calculo' },
];

const arrows = [
  [316, 128, 294, 28],
  [96, 347, 36, 248],
  [1682, 138, 1681, 31],
  [908, 482, 1027, 547],
  [281, 640, 210, 749],
  [1566, 662, 1591, 749],
];

const rowClass = (n) => {
  if (n === 26) return 'picked first';
  if (n === 27) return 'picked last';
  return undefined;
};

const RibbonGroup = ({ label, width, launcher, children, ...rest }) => (
  <Group $width={width}>
    <GroupBody {...rest}>{children}</GroupBody>
    <GroupLabel $launcher={launcher}>
      {label}
      {launcher && <Corner />}
    </GroupLabel>
  </Group>
);

const App = () => (
  <>
    <GlobalStyle />
    <Slide>
      <Window>
        <Chrome>
          <TitleBar>
            <QuickAccess>
              <ExcelMark />
              <SaveIcon />
              <svg width="90" height="14" viewBox="0 0 90 14" fill="none" stroke="#8d8d90" strokeWidth="2">
                <path d="M13 9q4-7 11-3M42 6q7-4 11 3" />
                <path d="M71 4h8M72 8l3 3 3-3z" stroke="#222" strokeWidth="1" fill="#222" />
              </svg>
            </QuickAccess>
            <Title>explicacion excel - Microsoft Excel</Title>
            <WindowButtons>
              <WindowButton aria-label="Minimizar">
                <svg width="12" height="12"><path d="M0 7h12v4H0z" fill="#fff" /></svg>
              </WindowButton>
              <WindowButton aria-label="Restaurar">
                <svg width="12" height="12" fill="none" stroke="#eee" strokeWidth="2">
                  <path d="M1 1h10v10H1zM4 4h4v4H4z" />
                </svg>
              </WindowButton>
              <WindowButton $close aria-label="Cerrar">
                <svg width="12" height="12" stroke="#fff" strokeWidth="3"><path d="M2 2l8 8M10 2l-8 8" /></svg>
              </WindowButton>
            </WindowButtons>
          </TitleBar>
          <TabBar>
            <FileTab>Archivo</FileTab>
            {tabs.map((name, i) => (
              <Tab key={name} $active={i === 0}>{name}</Tab>
            ))}
            <TabTools>
              <ToolButton aria-label="Minimizar la cinta">
                <svg width="12" height="10" fill="#f4f4f4" stroke="#77797e">
                  <path d="M1 6l5-4 5 4-2 3H3z" />
                </svg>
              </ToolButton>
              <ToolButton aria-label="Ayuda">
                <svg width="18" height="18" viewBox="0 0 18 18">
                  <circle cx="9" cy="9" r="8" fill="#3d6fd0" stroke="#2a50a5" />
                  <text x="6" y="14" fontSize="13" fontWeight="bold" fill="#fff">?</text>
                </svg>
              </ToolButton>
              <ToolButton aria-label="Minimizar libro">
                <svg width="14" height="8" fill="#fff" stroke="#77797e"><path d="M1 2h12v4H1z" /></svg>
              </ToolButton>
              <ToolButton aria-label="Restaurar libro">
                <svg width="13" height="13" fill="#eee" stroke="#66686d">
                  <path d="M4 1h8v7H4zM1 5h7v7H1z" />
                </svg>
              </ToolButton>
              <ToolButton aria-label="Cerrar libro">
                <svg width="10" height="10" stroke="#f4f4f4" strokeWidth="2"><path d="M1 1l8 8M9 1L1 9" /></svg>
              </ToolButton>
            </TabTools>
          </TabBar>
        </Chrome>

        <Ribbon>
          <RibbonGroup label="Portapapeles" width={178} launcher $pad={5}>
            <BigButton $width={48} $muted>
              <PasteIcon />
              Pegar
              <Caret size={4} color="#c4c4c8" />
            </BigButton>
            <Stack>
              <RowButton><CutIcon />Cortar</RowButton>
              <RowButton><CopyIcon />Copiar <Caret /></RowButton>
              <RowButton><BrushIcon />Copiar formato</RowButton>
            </Stack>
          </RibbonGroup>

          <RibbonGroup label="Fuente" width={241} launcher>
            <Stack $top={5}>
              <Tools>
                <Combo $width={128}>
                  <select aria-label="Fuente"><option>Calibri</option></select>
                  <Caret />
                </Combo>
                <Combo $width={49}>
                  <select aria-label="Tamaño de fuente"><option>11</option></select>
                  <Caret />
                </Combo>
                <Tool $width={30} $gap={0}><Glyph $size={20}>A</Glyph><Caret dir="up" size={4} /></Tool>
                <Tool $width={22} $gap={0}><Glyph $size={15}>A</Glyph><Caret size={4} /></Tool>
              </Tools>
              <Tools>
                <Tool><Glyph>N</Glyph></Tool>
                <Tool><Glyph $italic>K</Glyph></Tool>
                <Tool $width={40}><Glyph $underline>S</Glyph>&nbsp;<Caret /></Tool>
                <Split />
                <Tool $width={40}><BordersIcon /><Caret /></Tool>
                <Split />
                <Tool $width={38}><FillIcon /><Caret /></Tool>
                <Tool $width={38}><FontColorIcon /><Caret /></Tool>
              </Tools>
            </Stack>
          </RibbonGroup>

          <RibbonGroup label="Alineación" width={316} launcher $pad={8}>
            <Stack $top={5}>
              <Tools>
                <Tool><Block y={0} /></Tool>
                <Tool><Block y={4} /></Tool>
                <Tool $active><Block y={7} color="#6b5c14" /></Tool>
                <Split />
                <Tool $width={52}><OrientIcon /><Caret size={4} /></Tool>
                <Split />
                <Tool $width={112}><WrapIcon />Ajustar texto</Tool>
              </Tools>
              <Tools>
                <Tool><Lines widths={[16, 11, 16, 11, 16]} /></Tool>
                <Tool><Lines widths={[16, 10, 16, 10, 16]} align="center" /></Tool>
                <Tool><Lines widths={[16, 11, 16, 11, 16]} align="right" /></Tool>
                <Split />
                <Tool><Indent flip /></Tool>
                <Tool><Indent /></Tool>
                <Tool $width={172}><MergeIcon />Combinar y centrar <Caret /></Tool>
              </Tools>
            </Stack>
          </RibbonGroup>

          <RibbonGroup label="Número" width={165} launcher $pad={7}>
            <Stack $top={5}>
              <Tools>
                <Combo $width={154}>
                  <select aria-label="Formato de número"><option>General</option></select>
                  <Caret />
                </Combo>
              </Tools>
              <Tools>
                <Tool $width={40}><Glyph>$</Glyph>&nbsp;<Caret /></Tool>
                <Tool>%</Tool>
                <Tool $width={28}>000</Tool>
                <Split />
                <Tool><DecimalIcon /></Tool>
                <Tool><DecimalIcon less /></Tool>
              </Tools>
            </Stack>
          </RibbonGroup>

          <RibbonGroup label="Estilos" width={446} $pad={6}>
            <BigButton $width={86}>
              <TableIcon kind="rules" />
              <span>Formato<br />condicional <Caret size={4} /></span>
            </BigButton>
            <BigButton $width={84}>
              <TableIcon />
              <span>Dar formato<br />como tabla <Caret size={4} /></span>
            </BigButton>
            <Gallery>
              <StyleCell $active $fill="#fffefa" $ink="#3a3b55">Normal</StyleCell>
              <StyleCell $fill="#bfefc6" $ink="#3f8a4c">Buena</StyleCell>
              <StyleCell $fill="#ffb9c4" $ink="#b8324a">Incorrecto</StyleCell>
              <StyleCell $fill="#ffe08a" $ink="#bf8a2c">Neutral</StyleCell>
              <GalleryScroll>
                <Caret dir="up" size={4} color="#b5b7bc" />
                <Caret size={4} />
                <Caret />
              </GalleryScroll>
            </Gallery>
          </RibbonGroup>

          <RibbonGroup label="Celdas" width={170} $pad={5}>
            {[['Insertar', 'insert'], ['Eliminar', 'delete'], ['Formato', 'format']].map(([name, kind]) => (
              <BigButton key={name} $width={53}>
                <CellsIcon kind={kind} />
                {name}
                <Caret size={4} />
              </BigButton>
            ))}
          </RibbonGroup>

          <RibbonGroup label="Modificar" width={249} $pad={7}>
            <Stack>
              <RowButton><SigmaIcon />Autosuma <Caret /></RowButton>
              <RowButton><FillDownIcon />Rellenar <Caret /></RowButton>
              <RowButton><EraserIcon />Borrar <Caret /></RowButton>
            </Stack>
            <BigButton $width={58}>
              <SortIcon />
              <span>Ordenar<br />y filtrar <Caret size={4} /></span>
            </BigButton>
            <BigButton $width={82}>
              <BinocularsIcon />
              <span>Buscar y<br />seleccionar <Caret size={4} /></span>
            </BigButton>
          </RibbonGroup>
        </Ribbon>

        <FormulaBar>
          <NameBox>
            <input aria-label="Cuadro de nombres" defaultValue="T26" />
            <Caret size={7} color="#333" />
          </NameBox>
          <FxArea><Glyph $italic $size={18}>fx</Glyph></FxArea>
          <FormulaInput aria-label="Barra de fórmulas" />
          <Expand aria-label="Expandir"><Caret size={8} /></Expand>
        </FormulaBar>

        <SheetArea>
          <Grid>
            <colgroup>
              <col style={{ width: 31 }} />
              {columns.map((c) => <col key={c} />)}
              <col style={{ width: 41 }} />
            </colgroup>
            <thead>
              <tr>
                <th>
                  <svg width="12" height="12"><path d="M11 1v10H1z" fill="#c2c4cb" /></svg>
                </th>
                {columns.map((c) => <th key={c}>{c}</th>)}
                <th aria-label="T" />
              </tr>
            </thead>
            <tbody>
              {rows.map((n) => (
                <tr key={n} className={rowClass(n)}>
                  <th>{n}</th>
                  {columns.map((c) => <td key={c} />)}
                  <td />
                </tr>
              ))}
            </tbody>
          </Grid>
          <VScroll>
            <SplitBox />
            <ArrowSlot><Caret dir="up" size={8} color="#44464b" /></ArrowSlot>
            <ScrollThumb $vertical>
              <Grip />
            </ScrollThumb>
            <ArrowSlot><Caret size={8} color="#44464b" /></ArrowSlot>
          </VScroll>

          <Layer>
            <BannerPatch>
              <Banner>
                <CrestDrawing />
                <BannerText>
                  <School>{'COLEGIO  NACIONAL NICOLAS ESGUERRA'}</School>
                  <Motto>Edificamos Futuro</Motto>
                  <Authors>
                    <Author $top={39} $name={21}>
                      <strong>Sebastián Vela Mateus</strong>
                      <a className="large" href="mailto:naitvela@gmail.com">naitvela@gmail.com</a>
                      <a href="#ticsebastianvela903">ticsebastianvela903.blogspot.com</a>
                      <span>leltecnologia.blogspot.com</span>
                    </Author>
                    <Author $top={55} $name={24}>
                      <strong>Wilton Santiago Vargas Mosquera</strong>
                      <a href="mailto:santiagov913@gmail.com">santiagov913@gmail.com</a>
                      <a href="#ticwiltonsantiago903">ticwiltonsantiago903.blogspot.com</a>
                      <span>Teknorobot.blogspot.com</span>
                    </Author>
                  </Authors>
                </BannerText>
              </Banner>
              <Teacher>Profesor: John Alexander Caraballo</Teacher>
            </BannerPatch>

            {callouts.map((c) => (
              <Callout
                key={c.text}
                $x={c.x}
                $y={c.y}
                $w={c.w}
                $h={c.h}
                $size={c.size}
                $line={c.line}
                $pad={c.pad}
                $italic={c.italic}
              >
                {c.text}
              </Callout>
            ))}
            <MenuBubble>menú</MenuBubble>

            <Arrows>
              <defs>
                <marker id="head" markerUnits="userSpaceOnUse" markerWidth="24" markerHeight="24" refX="20" refY="12" orient="auto">
                  <path d="M1 2L22 12 1 22l3-10z" fill="#9bb957" />
                </marker>
              </defs>
              {arrows.map(([x1, y1, x2, y2]) => (
                <line key={x1} x1={x1} y1={y1} x2={x2} y2={y2} stroke="#98b25a" strokeWidth="5" markerEnd="url(#head)" />
              ))}
              <ellipse cx="1092" cy="568" rx="60" ry="24" fill="none" stroke="#e89a5c" strokeWidth="3" />
            </Arrows>
          </Layer>
        </SheetArea>

        <SheetTabs>
          <TabNav>
            <EndCaret />
            <Caret dir="left" />
            <Caret dir="right" />
            <EndCaret flip />
          </TabNav>
          <SheetTab $active>Hoja1</SheetTab>
          <SheetTab>Hoja2</SheetTab>
          <SheetTab>Hoja3</SheetTab>
          <svg width="60" height="17" viewBox="0 0 60 17" fill="none" stroke="#a9abb3">
            <path d="M-6 17L6 1M36 17L48 1" />
            <path d="M12 6h13v8h-9z" fill="#f1f2f5" stroke="#77798a" />
            <path d="M10 2l4 4M16 1v4" stroke="#d9b23c" />
          </svg>
          <HScroll>
            <SplitBox $upright />
            <ArrowSlot><Caret dir="left" size={8} color="#44464b" /></ArrowSlot>
            <ScrollThumb><Grip /></ScrollThumb>
            <ArrowSlot><Caret dir="right" size={8} color="#44464b" /></ArrowSlot>
            <SplitBox $upright />
          </HScroll>
        </SheetTabs>

        <StatusBar>
          <Ready>Listo</Ready>
          <StatusRight>
            <Views>
              <ViewButton $active aria-label="Normal"><MiniGrid /></ViewButton>
              <ViewButton aria-label="Diseño de página"><MiniPage /></ViewButton>
              <ViewButton aria-label="Vista previa"><MiniPage breaks /></ViewButton>
            </Views>
            <span>100%</span>
            <RoundButton aria-label="Alejar">−</RoundButton>
            <ZoomSlider type="range" min="0" max="100" defaultValue="52" aria-label="Zoom" />
            <RoundButton aria-label="Acercar">+</RoundButton>
          </StatusRight>
        </StatusBar>

        <TaskBar>
          <Task $start aria-label="Inicio"><StartIcon /></Task>
          <Task aria-label="Internet Explorer"><ExplorerIcon /></Task>
          <Task aria-label="Carpetas"><FolderIcon /></Task>
          <Task aria-label="Reproductor"><PlayerIcon /></Task>
          <Task $open aria-label="Chrome"><ChromeIcon /></Task>
          <Task $open aria-label="PowerPoint">
            <OfficeIcon letter="P" ink="#b5451f" paper="#f3b49c" edge="#d66a4a" />
          </Task>
          <Task $open $front aria-label="Excel">
            <OfficeIcon letter="X" ink="#2f7d3b" paper="#b9dfb4" edge="#6fae6c" />
          </Task>
          <Tray>
            <Caret dir="up" size={6} color="#e6e6e6" />
            <svg width="18" height="16" viewBox="0 0 18 16" fill="#eee">
              <path d="M1 5h3l5-4v14l-5-4H1z" />
              <path d="M11 5q2 3 0 6M14 3q3 5 0 10" fill="none" stroke="#999" />
            </svg>
            <svg width="18" height="18" viewBox="0 0 18 18" fill="#eee">
              <path d="M2 1h2v16H2zM4 2h6l1 2h6l-3 3-1 3H9L8 8H4z" />
            </svg>
            <svg width="18" height="16" viewBox="0 0 18 16" fill="none" stroke="#ddd" strokeWidth="2">
              <path d="M6 3h11v9H4V7M1 1v4h4V1M7 15h7" />
            </svg>
            <Clock>06:24 a.m.<br />12/02/2015</Clock>
            <ShowDesktop aria-label="Mostrar escritorio" />
          </Tray>
        </TaskBar>
      </Window>
    </Slide>
  </>
);

export default App;
